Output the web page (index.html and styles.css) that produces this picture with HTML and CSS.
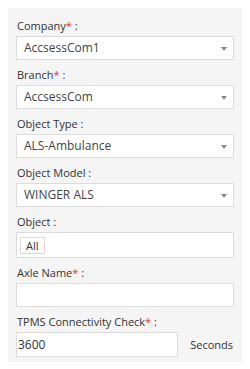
FILE: index.html
```html
<!DOCTYPE html>
<html lang="en">
<head>
  <meta charset="UTF-8" />
  <meta name="viewport" content="width=device-width, initial-scale=1.0"/>
  <title>Object Settings</title>
  <link rel="stylesheet" href="styles.css">
</head>
<body>

  <div class="panel">
    <div class="field">
      <label>Company<span class="req">*</span> :</label>
      <div class="select">AccsessCom1<span class="caret"></span></div>
    </div>

    <div class="field">
      <label>Branch<span class="req">*</span> :</label>
      <div class="select">AccsessCom<span class="caret"></span></div>
    </div>

    <div class="field">
      <label>Object Type :</label>
      <div class="select">ALS-Ambulance<span class="caret"></span></div>
    </div>

    <div class="field">
      <label>Object Model :</label>
      <div class="select">WINGER ALS<span class="caret"></span></div>
    </div>

    <div class="field">
      <label>Object :</label>
      <div class="multi"><span class="tag">All</span></div>
    </div>

    <div class="field">
      <label>Axle Name<span class="req">*</span> :</label>
      <input class="text" type="text">
    </div>

    <div class="field last">
      <label>TPMS Connectivity Check<span class="req">*</span> :</label>
      <div class="row">
        <input class="text short" type="text" value="3600">
        <span class="unit">Seconds</span>
      </div>
    </div>
  </div>

</body>
</html>
```

FILE: styles.css
```css
* {
  box-sizing: border-box;
}
body {
  margin: 8px;
  background: #fff;
  font-family: 'Open Sans', sans-serif;
  color: #333;
}
.panel {
  background: #f5f5f5;
  box-shadow: 0 1px 4px rgba(0, 0, 0, 0.18);
  padding: 10px 8px 5px;
}
.field {
  margin-bottom: 7px;
}
.field.last {
  margin-bottom: 0;
}
label {
  display: block;
  font-size: 11px;
  line-height: 15px;
  padding-left: 1px;
  margin-bottom: 3px;
  color: #333;
}
.req {
  color: #e53935;
}
.select {
  position: relative;
  height: 24px;
  background: #fff;
  border: 1px solid #dcdcdc;
  padding-left: 7px;
  font-size: 12px;
  line-height: 22px;
  color: #444;
}
.caret {
  position: absolute;
  right: 6px;
  top: 10px;
  width: 0;
  height: 0;
  border-left: 3px solid transparent;
  border-right: 3px solid transparent;
  border-top: 4px solid #888;
}
.multi {
  display: flex;
  align-items: center;
  height: 26px;
  background: #fff;
  border: 1px solid #dcdcdc;
  padding: 0 3px;
}
.tag {
  height: 17px;
  padding: 0 5px;
  border: 1px solid #dcdcdc;
  font-size: 11px;
  line-height: 15px;
  color: #333;
}
.text {
  display: block;
  width: 100%;
  height: 24px;
  margin: 0;
  background: #fff;
  border: 1px solid #dcdcdc;
  padding: 0 1px;
  font-family: inherit;
  font-size: 12px;
  color: #333;
  outline: none;
}
.row {
  display: flex;
  align-items: center;
  justify-content: space-between;
}
.text.short {
  width: 162px;
  height: 25px;
}
.unit {
  font-size: 11px;
  color: #333;
  padding-right: 1px;
}
```
